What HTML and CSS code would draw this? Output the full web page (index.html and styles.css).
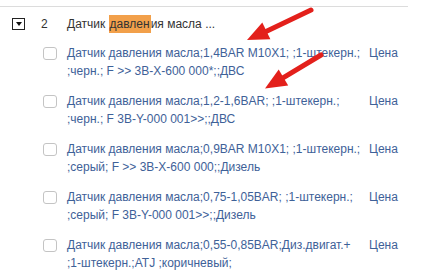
FILE: index.html
```html
<!DOCTYPE html>
<html lang="ru">
<head>
<meta charset="utf-8">
<title>Датчик давления масла</title>
<link rel="stylesheet" href="styles.css">
</head>
<body>
<div class="page">
  <div class="rule"></div>
  <div class="group">
    <div class="head">
      <span class="toggle"><span class="tri"></span></span>
      <span class="num">2</span>
      <span class="title">Датчик <mark class="hl">давлен</mark>ия масла ...</span>
    </div>
    <ul class="items">
      <li class="item">
        <span class="cb"></span>
        <span class="name">Датчик давления масла;1,4BAR M10X1; ;1-штекерн.; ;черн.; F &gt;&gt; 3B-X-600 000*;;ДВС</span>
        <span class="price">Цена</span>
      </li>
      <li class="item">
        <span class="cb"></span>
        <span class="name">Датчик давления масла;1,2-1,6BAR; ;1-штекерн.; ;черн.; F 3B-Y-000 001&gt;&gt;;;ДВС</span>
        <span class="price">Цена</span>
      </li>
      <li class="item">
        <span class="cb"></span>
        <span class="name">Датчик давления масла;0,9BAR M10X1; ;1-штекерн.; ;серый; F &gt;&gt; 3B-X-600 000;;Дизель</span>
        <span class="price">Цена</span>
      </li>
      <li class="item">
        <span class="cb"></span>
        <span class="name">Датчик давления масла;0,75-1,05BAR; ;1-штекерн.; ;серый; F 3B-Y-000 001&gt;&gt;;;Дизель</span>
        <span class="price">Цена</span>
      </li>
      <li class="item">
        <span class="cb"></span>
        <span class="name">Датчик давления масла;0,55-0,85BAR;Диз.двигат.+ ;1-штекерн.;ATJ ;коричневый;</span>
        <span class="price">Цена</span>
      </li>
    </ul>
  </div>
  <svg class="arrows" width="422" height="276" viewBox="0 0 422 276">
    <line x1="311" y1="10" x2="266" y2="31.5" class="shaft"/>
    <polygon points="247,40 270.4,39.2 262.3,22.4" class="head-poly"/>
    <line x1="321" y1="55" x2="283" y2="77.8" class="shaft"/>
    <polygon points="265,88.5 288.2,85.4 278.7,69.4" class="head-poly"/>
  </svg>
</div>
</body>
</html>
```
FILE: styles.css
```css
html, body {
  margin: 0;
  padding: 0;
  background: #fff;
}
.page {
  position: relative;
  width: 422px;
  height: 276px;
  overflow: hidden;
  font-family: "Liberation Sans", Arial, sans-serif;
  font-size: 12px;
  color: #333;
}
.rule {
  margin-top: 6px;
  width: 408px;
  height: 1px;
  background: #dcdcdc;
}
.group {
  padding-top: 9px;
}
.head {
  display: flex;
  align-items: center;
  height: 15px;
}
.toggle {
  box-sizing: border-box;
  width: 13px;
  height: 12px;
  margin-left: 12px;
  border: 1px solid #222;
  display: flex;
  align-items: center;
  justify-content: center;
}
.tri {
  width: 0;
  height: 0;
  border-left: 3px solid transparent;
  border-right: 3px solid transparent;
  border-top: 4px solid #111;
}
.num {
  margin-left: 16px;
  width: 26px;
}
.title {
  color: #333;
}
.hl {
  background: #f2a04a;
  color: #333;
  padding: 2px 1px 2px 1px;
}
.items {
  list-style: none;
  margin: 0;
  padding: 0;
  margin-top: 13px;
}
.item {
  display: flex;
  align-items: flex-start;
  line-height: 18px;
  margin-bottom: 12px;
}
.cb {
  box-sizing: border-box;
  flex: none;
  width: 14px;
  height: 13px;
  margin-left: 43px;
  margin-top: 3px;
  border: 1px solid #c4c4c4;
  border-radius: 3px;
  background: #fff;
}
.name {
  margin-left: 10px;
  width: 294px;
  color: #3e6198;
}
.price {
  margin-left: 8px;
  color: #3e6198;
}
.arrows {
  position: absolute;
  left: 0;
  top: 0;
  pointer-events: none;
}
.shaft {
  stroke: #e3201b;
  stroke-width: 5;
  stroke-linecap: round;
}
.head-poly {
  fill: #e3201b;
}
```
